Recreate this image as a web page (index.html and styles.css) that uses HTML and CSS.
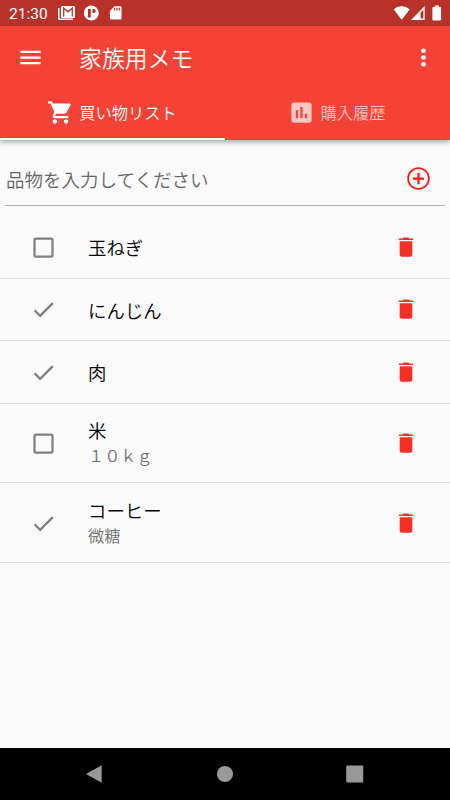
FILE: index.html
```
<!DOCTYPE html>
<html lang="ja">
<head>
    <meta charset="UTF-8">
    <title>家族用メモ</title>
    <link rel="stylesheet" href="styles.css">
</head>
<body>
    <!-- Shared icons -->
    <svg class="icon-defs">
        <symbol id="box" viewBox="0 0 24 24"><path d="M19 5v14H5V5h14m0-2H5c-1.1 0-2 .9-2 2v14c0 1.1.9 2 2 2h14c1.1 0 2-.9 2-2V5c0-1.1-.9-2-2-2z"/></symbol>
        <symbol id="check" viewBox="0 0 24 24"><path d="M9 16.17L4.83 12l-1.42 1.41L9 19 21 7l-1.41-1.41z"/></symbol>
        <symbol id="trash" viewBox="0 0 16 20"><path d="M.8 1.4h3.8L5.8.5h4.4l1.2.9h3.8V3H.8z"/><path d="M1.7 4.3h12.6v13.5c0 1.1-.8 1.9-1.9 1.9H3.6c-1.1 0-1.9-.8-1.9-1.9z"/></symbol>
    </svg>

    <div class="status-bar">
        <span class="clock">21:30</span>
        <svg class="notifications" viewBox="0 0 66 18">
            <path d="M.8 4v11.2h14" fill="none" stroke="#fff" stroke-width="1.5"/>
            <path d="M4.5 2h11c1 0 1.5.5 1.5 1.5v9c0 1-.5 1.5-1.5 1.5h-11c-1 0-1.5-.5-1.5-1.5v-9C3 2.5 3.5 2 4.5 2z"/>
            <path class="cut" d="M5.7 12.4V4.2L10 7.8l4.3-3.6v8.2" fill="none" stroke-width="1.3"/>
            <circle cx="33.3" cy="9" r="7.5"/>
            <path class="cut-fill" d="M30 5h2.8v8.5H30zM34.5 5h2c1.5 0 1.5 4 0 4h-2z"/>
            <path d="M56.5 2.2h5.7c.8 0 1.3.5 1.3 1.3v10.7c0 .8-.5 1.3-1.3 1.3h-9c-.8 0-1.3-.5-1.3-1.3V7z"/>
            <path class="cut" d="M56.7 3.8v2.7M59 3.8v2.7M61.3 3.8v2.7" stroke-width="1.2"/>
        </svg>
        <svg class="signals" viewBox="0 0 50 18">
            <path d="M.8 5.5C5 1.2 12 1.2 16.7 5.5L8.7 15.7z"/>
            <path d="M18 16L31.7 2v14z"/>
            <path class="cut-fill" d="M27.6 8.6l2.7-2.8v8.6h-2.7z"/>
            <path d="M41.8 1.6h4V3h1.4c.5 0 .9.4.9.9v11.6c0 .5-.4.9-.9.9h-6.9c-.5 0-.9-.4-.9-.9V3.9c0-.5.4-.9.9-.9h1.5z"/>
        </svg>
    </div>

    <header class="header">
        <div class="toolbar">
            <svg class="icon" viewBox="0 0 24 24"><path d="M3 18h18v-2H3v2zm0-5h18v-2H3v2zm0-7v2h18V6H3z"/></svg>
            <h1>家族用メモ</h1>
            <svg class="icon" viewBox="0 0 24 24"><circle cx="12" cy="6" r="2.1"/><circle cx="12" cy="12" r="2.1"/><circle cx="12" cy="18" r="2.1"/></svg>
        </div>
        <nav class="tabs">
            <div class="tab active">
                <svg class="icon" viewBox="0 0 24 24"><path d="M7 18c-1.1 0-1.99.9-1.99 2S5.9 22 7 22s2-.9 2-2-.9-2-2-2zM1 2v2h2l3.6 7.59-1.35 2.45c-.16.28-.25.61-.25.96 0 1.1.9 2 2 2h12v-2H7.42c-.14 0-.25-.11-.25-.25l.03-.12.9-1.63h7.45c.75 0 1.41-.41 1.75-1.03l3.58-6.49c.08-.14.12-.31.12-.48 0-.55-.45-1-1-1H5.21l-.94-2H1zm16 16c-1.1 0-1.99.9-1.99 2s.89 2 1.99 2 2-.9 2-2-.9-2-2-2z"/></svg>
                <span>買い物リスト</span>
            </div>
            <div class="tab">
                <svg class="icon" viewBox="0 0 24 24"><path d="M19 3H5c-1.1 0-2 .9-2 2v14c0 1.1.9 2 2 2h14c1.1 0 2-.9 2-2V5c0-1.1-.9-2-2-2zM9 17H7v-7h2v7zm4 0h-2V7h2v10zm4 0h-2v-4h2v4z"/></svg>
                <span>購入履歴</span>
            </div>
        </nav>
    </header>

    <main>
        <div class="item-form">
            <span class="placeholder">品物を入力してください</span>
            <svg class="icon" viewBox="0 0 24 24"><path d="M13 7h-2v4H7v2h4v4h2v-4h4v-2h-4V7zm-1-5C6.48 2 2 6.48 2 12s4.48 10 10 10 10-4.48 10-10S17.52 2 12 2zm0 18.4c-4.6 0-8.4-3.8-8.4-8.4s3.8-8.4 8.4-8.4 8.4 3.8 8.4 8.4-3.8 8.4-8.4 8.4z"/></svg>
        </div>

        <ul class="items">
            <li class="item">
                <svg class="icon mark"><use href="#box"/></svg>
                <div class="label">玉ねぎ</div>
                <svg class="trash"><use href="#trash"/></svg>
            </li>
            <li class="item">
                <svg class="icon mark"><use href="#check"/></svg>
                <div class="label">にんじん</div>
                <svg class="trash"><use href="#trash"/></svg>
            </li>
            <li class="item">
                <svg class="icon mark"><use href="#check"/></svg>
                <div class="label">肉</div>
                <svg class="trash"><use href="#trash"/></svg>
            </li>
            <li class="item tall">
                <svg class="icon mark"><use href="#box"/></svg>
                <div class="label">米<small>１０ｋｇ</small></div>
                <svg class="trash"><use href="#trash"/></svg>
            </li>
            <li class="item tall">
                <svg class="icon mark"><use href="#check"/></svg>
                <div class="label">コーヒー<small>微糖</small></div>
                <svg class="trash"><use href="#trash"/></svg>
            </li>
        </ul>
    </main>

    <footer class="nav-bar">
        <svg viewBox="0 0 18 18"><path d="M0 9L15.7.2v17.6z"/></svg>
        <svg viewBox="0 0 18 18"><circle cx="9" cy="9" r="8"/></svg>
        <svg viewBox="0 0 18 18"><rect x=".2" y=".5" width="17" height="17" rx="1"/></svg>
    </footer>
</body>
</html>
```
FILE: styles.css
```
* {
    box-sizing: border-box;
}

body {
    margin: 0;
    height: 800px;
    display: flex;
    flex-direction: column;
    overflow: hidden;
    background: #fafafa;
    font-family: "Noto Sans CJK JP", sans-serif;
    font-weight: 350;
    color: #000;
}

.icon-defs {
    display: none;
}

.icon {
    width: 27px;
    height: 27px;
    flex: none;
    fill: currentColor;
}

/* Status bar */
.status-bar {
    display: flex;
    align-items: center;
    height: 26px;
    flex: none;
    padding: 0 7px 0 9px;
    background: #b93229;
    color: #fff;
}

.clock {
    width: 49px;
    padding-top: 1px;
    font: 400 15.5px/28px Roboto, sans-serif;
}

.notifications {
    width: 66px;
    height: 18px;
    fill: #fff;
}

.signals {
    width: 50px;
    height: 18px;
    margin-left: auto;
    fill: #fff;
}

.cut {
    stroke: #b93229;
}

.cut-fill {
    fill: #b93229;
}

/* Header with tabs */
.header {
    height: 114px;
    flex: none;
    background: #f44336;
    color: #fff;
    box-shadow: 0 2px 5px rgba(0, 0, 0, 0.35);
}

.toolbar {
    display: flex;
    align-items: center;
    height: 62px;
    padding: 0 13px 0 17px;
}

.toolbar h1 {
    flex: 1;
    margin: 0 0 1px 35px;
    font-size: 22.9px;
    font-weight: 350;
    line-height: 30px;
}

.tabs {
    display: flex;
    height: 52px;
}

.tab {
    flex: 1;
    display: flex;
    align-items: center;
    justify-content: center;
    gap: 5px;
    padding: 0 1px 2px 0;
    border-bottom: 2px solid transparent;
    font-size: 16.3px;
    color: rgba(255, 255, 255, 0.7);
}

.tab.active {
    border-color: #fff;
    color: #fff;
}

/* New item input */
.item-form {
    display: flex;
    align-items: center;
    justify-content: space-between;
    height: 66px;
    margin: 0 5px;
    padding: 11px 13px 0 1px;
    border-bottom: 1px solid #b0b0b0;
    font-size: 18.5px;
    color: #666;
}

.item-form .placeholder {
    padding-top: 1px;
}

.item-form .icon {
    color: #f41b12;
}

/* Shopping list */
.items {
    list-style: none;
    margin: 10px 0 0;
    padding: 0;
}

.item {
    display: flex;
    align-items: center;
    height: 62.5px;
    padding: 0 36px 0 30px;
    border-bottom: 1px solid #e0e0e0;
}

.item.tall {
    height: 79.8px;
}

.mark {
    margin-top: 1px;
    color: #808080;
}

.label {
    flex: 1;
    margin-left: 31px;
    padding-top: 2px;
    font-size: 18.4px;
    line-height: 27px;
}

.tall .label {
    padding: 0 0 2px;
}

.label small {
    display: block;
    font-size: 16.2px;
    line-height: 23px;
    color: #707070;
}

.trash {
    width: 16px;
    height: 20px;
    fill: #f43024;
}

/* Android navigation bar */
.nav-bar {
    display: flex;
    align-items: center;
    justify-content: center;
    gap: 112px;
    height: 52px;
    flex: none;
    margin-top: auto;
    background: #000;
}

.nav-bar svg {
    width: 18px;
    height: 18px;
    fill: #999;
}
```
